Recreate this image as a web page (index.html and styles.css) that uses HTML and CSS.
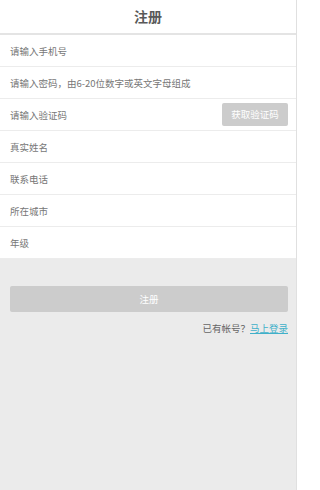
FILE: index.html
```html
<!DOCTYPE html>
<html lang="zh-CN">
<head>
<meta charset="utf-8">
<title>注册</title>
<link rel="stylesheet" href="styles.css">
</head>
<body>
<div class="page">
  <header class="header">注册</header>
  <div class="form">
    <div class="row"><span class="ph">请输入手机号</span></div>
    <div class="row"><span class="ph">请输入密码，由6-20位数字或英文字母组成</span></div>
    <div class="row"><span class="ph">请输入验证码</span><span class="code-btn">获取验证码</span></div>
    <div class="row"><span class="ph">真实姓名</span></div>
    <div class="row"><span class="ph">联系电话</span></div>
    <div class="row"><span class="ph">所在城市</span></div>
    <div class="row"><span class="ph">年级</span></div>
  </div>
  <div class="actions">
    <div class="submit">注册</div>
    <div class="login">已有帐号？<a class="login-link" href="#">马上登录</a></div>
  </div>
</div>
</body>
</html>
```
FILE: styles.css
```css
html, body {
  margin: 0;
  padding: 0;
  background: #ffffff;
  font-family: "Noto Sans CJK SC", "Noto Sans", sans-serif;
}
.page {
  width: 296px;
  min-height: 490px;
  background: #ebebeb;
  border-right: 1px solid #e0e0e0;
}
.header {
  height: 33px;
  line-height: 33px;
  background: #fff;
  text-align: center;
  font-size: 14px;
  font-weight: bold;
  color: #595959;
  border-bottom: 2px solid #e4e4e4;
}
.form {
  background: #fff;
}
.row {
  height: 31px;
  display: flex;
  align-items: center;
  justify-content: space-between;
  padding: 0 8px 0 10px;
  border-bottom: 1px solid #ececec;
}
.ph {
  font-size: 9.5px;
  color: #777;
}
.code-btn {
  width: 66px;
  height: 23px;
  line-height: 23px;
  background: #cccccc;
  color: #fff;
  font-size: 9.5px;
  text-align: center;
  border-radius: 2px;
}
.actions {
  padding: 27px 8px 0 10px;
}
.submit {
  height: 26px;
  line-height: 26px;
  background: #cccccc;
  color: #fff;
  font-size: 9.5px;
  text-align: center;
  border-radius: 2px;
}
.login {
  margin-top: 9px;
  text-align: right;
  font-size: 9.5px;
  color: #666;
}
.login-link {
  color: #3fb0c9;
  text-decoration: underline;
}
```
